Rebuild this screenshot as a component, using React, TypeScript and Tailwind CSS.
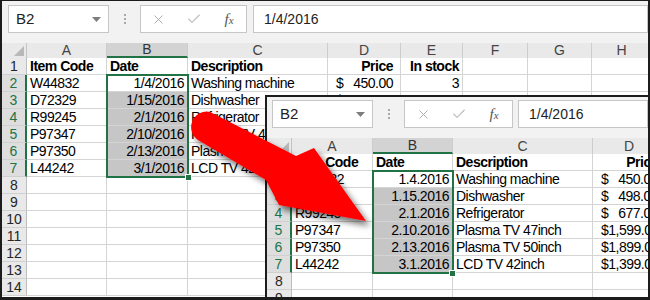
import React from 'react';
import { X, Check } from 'lucide-react';

type Kind = 'text' | 'date' | 'money' | 'num';

interface Col {
  label: string;
  w: string;
  kind: Kind;
}

interface SheetProps {
  cols: Col[];
  rows: string[][];
  rowCount: number;
  formula: string;
  barPad: string;
  headH: string;
  box2W: string;
  formulaGap: string;
  sel: string;
  handle: string;
}

const backCols: Col[] = [
  { label: 'A', w: 'w-[80px]', kind: 'text' },
  { label: 'B', w: 'w-[81px]', kind: 'date' },
  { label: 'C', w: 'w-[140px]', kind: 'text' },
  { label: 'D', w: 'w-[73px]', kind: 'money' },
  { label: 'E', w: 'w-[62px]', kind: 'num' },
  { label: 'F', w: 'w-[65px]', kind: 'text' },
  { label: 'G', w: 'w-[64px]', kind: 'text' },
  { label: 'H', w: 'w-[60px]', kind: 'text' },
];

const frontCols: Col[] = [
  { label: 'A', w: 'w-[81px]', kind: 'text' },
  { label: 'B', w: 'w-[80px]', kind: 'date' },
  { label: 'C', w: 'w-[140px]', kind: 'text' },
  { label: 'D', w: 'w-[73px]', kind: 'money' },
];

const backRows = [
  ['Item Code', 'Date', 'Description', 'Price', 'In stock'],
  ['W44832', '1/4/2016', 'Washing machine', '450.00', '3'],
  ['D72329', '1/15/2016', 'Dishwasher', '498.00', '5'],
  ['R99245', '2/1/2016', 'Refrigerator', '677.00', '2'],
  ['P97347', '2/10/2016', 'Plasma TV 47inch', '1,599.00', '4'],
  ['P97350', '2/13/2016', 'Plasma TV 50inch', '1,899.00', '1'],
  ['L44242', '3/1/2016', 'LCD TV 42inch', '1,399.00', '6'],
];

const frontRows = [
  ['Item Code', 'Date', 'Description', 'Price'],
  ['W44832', '1.4.2016', 'Washing machine', '450.00'],
  ['D72329', '1.15.2016', 'Dishwasher', '498.00'],
  ['R99245', '2.1.2016', 'Refrigerator', '677.00'],
  ['P97347', '2.10.2016', 'Plasma TV 47inch', '1,599.00'],
  ['P97350', '2.13.2016', 'Plasma TV 50inch', '1,899.00'],
  ['L44242', '3.1.2016', 'LCD TV 42inch', '1,399.00'],
];

function Sheet({ cols, rows, rowCount, formula, barPad, headH, box2W, formulaGap, sel, handle }: SheetProps) {
  return (
    <div className="bg-[#f2f2f2]">
      {/* Formula bar */}
      <div className={`flex items-center ${barPad}`}>
        <div className="w-[101px] h-[28px] shrink-0 bg-white border border-[#c6c6c6] flex items-center justify-between pl-[7px] pr-[7px]">
          <span className="text-[15px] text-[#222]">B2</span>
          <svg width="9" height="5" viewBox="0 0 9 5">
            <polygon points="0,0 9,0 4.5,5" fill="#7d7d7d" />
          </svg>
        </div>
        <div className="w-[31px] shrink-0 flex flex-col items-center gap-[2px]">
          <span className="w-[2px] h-[2px] bg-[#a9a9a9]" />
          <span className="w-[2px] h-[2px] bg-[#a9a9a9]" />
          <span className="w-[2px] h-[2px] bg-[#a9a9a9]" />
        </div>
        <div className={`${box2W} h-[28px] shrink-0 bg-white border border-[#c6c6c6] flex items-center`}>
          <span className="w-[36px] flex justify-center">
            <X size={15} strokeWidth={1.4} color="#a3a3a3" />
          </span>
          <span className="w-[36px] flex justify-center">
            <Check size={16} strokeWidth={1.6} color="#bdbdbd" />
          </span>
          <span className="w-[34px] flex justify-center italic font-['Liberation_Serif',serif] text-[15px] text-[#555]">
            f<span className="text-[11px] mt-[4px]">x</span>
          </span>
        </div>
        <div className={`flex-1 h-[28px] bg-white border border-[#c6c6c6] flex items-center pl-[10px] text-[14px] text-[#222] ${formulaGap}`}>
          {formula}
        </div>
      </div>

      {/* Column headers */}
      <div className={`flex mt-[10px] ${headH} bg-[#e9e9e9]`}>
        <div className="w-[25px] shrink-0 relative border-r border-[#c4c4c4]">
          <svg className="absolute right-[2px] bottom-[2px]" width="10" height="10" viewBox="0 0 10 10">
            <polygon points="10,0 10,10 0,10" fill="#b8b8b8" />
          </svg>
        </div>
        {cols.map((c) => (
          <div
            key={c.label}
            className={`${c.w} shrink-0 flex items-center justify-center text-[14px] border-r border-[#cdcdcd] ${
              c.label === 'B' ? 'bg-[#d3d3d3] text-[#333] border-b-2 border-b-[#217346]' : 'text-[#444]'
            }`}
          >
            {c.label}
          </div>
        ))}
      </div>

      {/* Rows */}
      <div className="relative">
        {Array.from({ length: rowCount }).map((_, i) => {
          const r = i + 1;
          const data = rows[i] || [];
          const selRow = r >= 2 && r <= 7;
          return (
            <div key={r} className="flex h-[17px]">
              <div
                className={`w-[25px] shrink-0 flex items-center justify-center text-[14px] border-b border-[#d0d0d0] ${
                  selRow
                    ? 'bg-[#dedede] text-[#217346] border-r-2 border-r-[#217346]'
                    : 'bg-[#e9e9e9] text-[#262626] border-r border-r-[#bdbdbd]'
                }`}
              >
                {r}
              </div>
              {cols.map((c, j) => {
                const v = data[j] ?? '';
                const head = r === 1;
                const gray = c.label === 'B' && r >= 3 && r <= 7;
                const base = `${c.w} shrink-0 h-[17px] border-r border-b border-[#d4d4d4] overflow-hidden whitespace-nowrap text-[14px] leading-[16px] tracking-[-0.5px] text-black ${
                  gray ? 'bg-[#c6c6c6]' : 'bg-white'
                } ${head ? 'font-bold' : ''}`;
                if (c.kind === 'money' && v && !head) {
                  return (
                    <div key={c.label} className={`${base} flex justify-between pl-[8px] pr-[7px]`}>
                      <span>$</span>
                      <span>{v}</span>
                    </div>
                  );
                }
                let align = 'text-left pl-[3px]';
                if (c.kind === 'money') align = 'text-right pr-[7px]';
                else if (c.kind === 'num') align = 'text-right pr-[3px]';
                else if (c.kind === 'date' && !head) align = 'text-right pr-[3px]';
                return (
                  <div key={c.label} className={`${base} ${align}`}>
                    {v}
                  </div>
                );
              })}
            </div>
          );
        })}
        <div className={`absolute border-2 border-[#217346] ${sel}`} />
        <div className={`absolute w-[7px] h-[7px] bg-[#217346] border border-white ${handle}`} />
      </div>
    </div>
  );
}

export default function App() {
  return (
    <div className="relative w-[650px] h-[300px] overflow-hidden bg-white border-l-2 border-r-2 border-t border-b-[3px] border-[#1c1c1c] font-['Liberation_Sans',Arial,sans-serif]">
      <Sheet
        cols={backCols}
        rows={backRows}
        rowCount={14}
        formula="1/4/2016"
        barPad="pt-[4px] pl-[6px]"
        headH="h-[15px]"
        box2W="w-[107px]"
        formulaGap="ml-[6px]"
        sel="left-[104px] top-[16px] w-[83px] h-[104px]"
        handle="left-[183px] top-[116px]"
      />

      <div className="absolute left-[263px] top-[94px] right-0 bottom-0 overflow-hidden border-l-2 border-t-2 border-[#1c1c1c] bg-white">
        <Sheet
          cols={frontCols}
          rows={frontRows}
          rowCount={9}
          formula="1/4/2016"
          barPad="pt-[3px] pl-[5px]"
          headH="h-[16px]"
          box2W="w-[109px]"
          formulaGap="ml-[5px]"
          sel="left-[105px] top-[16px] w-[82px] h-[104px]"
          handle="left-[182px] top-[116px]"
        />
      </div>

      {/* Red arrow */}
      <svg
        className="absolute left-[-2px] top-[-1px] pointer-events-none"
        width="650"
        height="300"
        viewBox="0 0 650 300"
      >
        <defs>
          <filter id="arrowShadow" x="-20%" y="-20%" width="140%" height="140%">
            <feDropShadow dx="4" dy="5" stdDeviation="3" floodColor="#000" floodOpacity="0.55" />
          </filter>
        </defs>
        <path
          d="M210 112 L296 156 L314 148 L366 221 L279 205 L266 180 L198 140 A15.5 15.5 0 0 1 210 112 Z"
          fill="#fe0000"
          filter="url(#arrowShadow)"
        />
      </svg>
    </div>
  );
}
